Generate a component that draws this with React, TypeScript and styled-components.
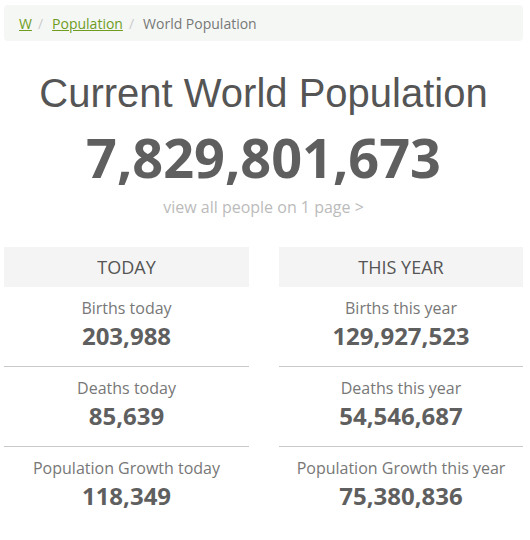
import React from 'react';
import styled, { createGlobalStyle } from 'styled-components';

const GlobalStyle = createGlobalStyle`
    body {
        margin: 0;
        background: #ffffff;
        font-family: 'Open Sans', 'Liberation Sans', sans-serif;
    }
`;

const Page = styled.div`
    width: 519px;
    margin-left: 4px;
    padding-top: 5px;
`;

const Breadcrumb = styled.nav`
    display: flex;
    align-items: center;
    height: 36px;
    padding: 0 15px;
    background-color: #f5f7f5;
    border-radius: 4px;
    font-size: 14px;
    color: #777777;
`;

const Crumb = styled.a`
    color: #6f9c1f;
    text-decoration: underline;
`;

const Sep = styled.span`
    color: #cccccc;
    padding: 0 9px 0 6px;
`;

const Hero = styled.div`
    display: flex;
    flex-direction: column;
    align-items: center;
    margin-top: 28px;
`;

const Title = styled.h1`
    margin: 0;
    font-family: 'Liberation Sans', Arial, sans-serif;
    font-weight: 400;
    font-size: 40px;
    line-height: 48px;
    color: #555555;
`;

const Counter = styled.div`
    margin-top: 8px;
    font-size: 54px;
    line-height: 64px;
    font-weight: 700;
    color: #5f5f5f;
`;

const AllPeople = styled.a`
    margin-top: 8px;
    font-size: 16px;
    line-height: 20px;
    color: #bbbbbb;
    text-decoration: none;
`;

const Columns = styled.div`
    display: grid;
    grid-template-columns: 245px 244px;
    column-gap: 30px;
    margin-top: 30px;
`;

const Column = styled.div`
    display: flex;
    flex-direction: column;
`;

const ColumnHeader = styled.div`
    height: 40px;
    display: flex;
    align-items: center;
    justify-content: center;
    background-color: #f4f4f4;
    font-size: 18px;
    color: #555555;
`;

const StatRow = styled.div<{ $last?: boolean }>`
    display: flex;
    flex-direction: column;
    align-items: center;
    padding: 9px 0 14px;
    border-bottom: ${(p) => (p.$last ? 'none' : '1px solid #c8c8c8')};
`;

const StatLabel = styled.div`
    font-size: 16px;
    line-height: 24px;
    color: #777777;
`;

const StatValue = styled.div`
    font-size: 24px;
    line-height: 32px;
    font-weight: 700;
    color: #5f5f5f;
`;

const columns = [
    {
        title: 'TODAY',
        stats: [
            { label: 'Births today', value: '203,988' },
            { label: 'Deaths today', value: '85,639' },
            { label: 'Population Growth today', value: '118,349' },
        ],
    },
    {
        title: 'THIS YEAR',
        stats: [
            { label: 'Births this year', value: '129,927,523' },
            { label: 'Deaths this year', value: '54,546,687' },
            { label: 'Population Growth this year', value: '75,380,836' },
        ],
    },
];

export default function App() {
    return (
        <>
            <GlobalStyle />
            <Page>
                <Breadcrumb>
                    <Crumb>W</Crumb>
                    <Sep>/</Sep>
                    <Crumb>Population</Crumb>
                    <Sep>/</Sep>
                    <span>World Population</span>
                </Breadcrumb>

                <Hero>
                    <Title>Current World Population</Title>
                    <Counter>7,829,801,673</Counter>
                    <AllPeople>view all people on 1 page &gt;</AllPeople>
                </Hero>

                <Columns>
                    {columns.map((col) => (
                        <Column key={col.title}>
                            <ColumnHeader>{col.title}</ColumnHeader>
                            {col.stats.map((s, i) => (
                                <StatRow key={s.label} $last={i === col.stats.length - 1}>
                                    <StatLabel>{s.label}</StatLabel>
                                    <StatValue>{s.value}</StatValue>
                                </StatRow>
                            ))}
                        </Column>
                    ))}
                </Columns>
            </Page>
        </>
    );
}
